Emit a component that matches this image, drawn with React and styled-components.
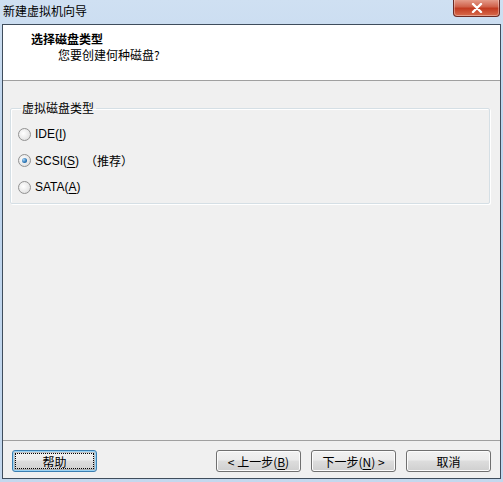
import React from "react";
import styled, { createGlobalStyle } from "styled-components";

const GlobalStyle = createGlobalStyle`
  html, body {
    margin: 0;
    padding: 0;
  }
  body {
    font-family: "Liberation Sans", "Noto Sans CJK SC", sans-serif;
    font-size: 12px;
    color: #000;
  }
`;

const options = [
  { id: "ide", label: "IDE", key: "I", note: "" },
  { id: "scsi", label: "SCSI", key: "S", note: "（推荐）", checked: true },
  { id: "sata", label: "SATA", key: "A", note: "" },
];

const App = () => {
  return (
    <>
      <GlobalStyle />
      <Frame>
        <TitleBar>
          <Title>新建虚拟机向导</Title>
          <CloseButton>
            <svg width="14" height="10" viewBox="0 0 14 10">
              <path d="M3 1 L11 9 M11 1 L3 9" stroke="#fff" strokeWidth="2.4" strokeLinecap="round" />
            </svg>
          </CloseButton>
        </TitleBar>

        <Client>
          <Header>
            <HeaderTitle>选择磁盘类型</HeaderTitle>
            <HeaderSub>您要创建何种磁盘?</HeaderSub>
          </Header>

          <Body>
            <GroupBox>
              <Legend>虚拟磁盘类型</Legend>
              {options.map((o) => (
                <RadioRow key={o.id}>
                  <Radio $checked={o.checked} />
                  <RadioLabel>
                    {o.label}(<u>{o.key}</u>)
                  </RadioLabel>
                  {o.note && <Note>{o.note}</Note>}
                </RadioRow>
              ))}
            </GroupBox>
          </Body>

          <Footer>
            <Button $focused>帮助</Button>
            <Spacer />
            <Button>&lt; 上一步(<u>B</u>)</Button>
            <Button>下一步(<u>N</u>) &gt;</Button>
            <Button>取消</Button>
          </Footer>
        </Client>
      </Frame>
    </>
  );
};

export default App;

const Frame = styled.div`
  width: 503px;
  height: 482px;
  box-sizing: border-box;
  display: flex;
  flex-direction: column;
  padding: 0 2px 3px 2px;
  background: linear-gradient(180deg, #cfe0f2 0%, #bcd3ec 30%, #c4d8ee 100%);
`;

const TitleBar = styled.div`
  height: 24px;
  display: flex;
  align-items: flex-start;
  justify-content: space-between;
`;

const Title = styled.div`
  padding: 4px 0 0 1px;
  font-family: "Noto Sans CJK SC", sans-serif;
  font-size: 12px;
  line-height: 14px;
  color: #000;
`;

const CloseButton = styled.div`
  width: 45px;
  height: 17px;
  margin-top: -1px;
  margin-right: 1px;
  display: flex;
  align-items: center;
  justify-content: center;
  border: 1px solid #6b2a24;
  border-top: none;
  border-radius: 0 0 4px 4px;
  background: linear-gradient(180deg, #e8a493 0%, #d0624b 45%, #c23b21 55%, #d86b4c 100%);
  box-shadow: inset 0 0 0 1px rgba(255, 255, 255, 0.35);
`;

const Client = styled.div`
  flex: 1;
  display: flex;
  flex-direction: column;
  border: 1px solid #3f4d5c;
  background: #f0f0f0;
`;

const Header = styled.div`
  height: 56px;
  box-sizing: border-box;
  background: #fff;
  border-bottom: 1px solid #a0a0a0;
  padding: 6px 0 0 28px;
  font-family: "Noto Sans CJK SC", sans-serif;
`;

const HeaderTitle = styled.div`
  font-weight: bold;
  font-size: 12px;
  line-height: 16px;
`;

const HeaderSub = styled.div`
  padding-left: 27px;
  font-size: 12px;
  line-height: 16px;
`;

const Body = styled.div`
  flex: 1;
  padding: 20px 10px 0 7px;
`;

const GroupBox = styled.fieldset`
  margin: 0;
  height: 103px;
  box-sizing: border-box;
  padding: 6px 0 0 7px;
  border: 1px solid #d5dfe5;
  border-radius: 2px;
  box-shadow: inset 1px 1px 0 #fff, 1px 1px 0 #fff;
`;

const Legend = styled.legend`
  padding: 0 2px 0 1px;
  margin-left: 3px;
  font-family: "Noto Sans CJK SC", sans-serif;
  font-size: 12px;
  line-height: 14px;
`;

const RadioRow = styled.div`
  height: 26.5px;
  display: flex;
  align-items: center;
`;

const Radio = styled.span`
  width: 13px;
  height: 13px;
  box-sizing: border-box;
  border-radius: 50%;
  border: 1px solid #929292;
  background: radial-gradient(circle at 40% 40%, #ffffff 0%, #e6e6e6 65%, #cdcdcd 100%);
  position: relative;
  margin-right: 4px;

  &::after {
    content: "";
    display: ${(p) => (p.$checked ? "block" : "none")};
    position: absolute;
    left: 3px;
    top: 3px;
    width: 5px;
    height: 5px;
    border-radius: 50%;
    background: radial-gradient(circle at 35% 35%, #a6d4f5 0%, #2a74b4 60%, #1b4f84 100%);
  }
`;

const RadioLabel = styled.span`
  font-family: "Liberation Sans", "Noto Sans CJK SC", sans-serif;
  font-size: 12px;
  line-height: 14px;

  u {
    text-underline-offset: 2px;
  }
`;

const Note = styled.span`
  margin-left: 6px;
  font-family: "Noto Sans CJK SC", sans-serif;
  font-size: 12px;
`;

const Footer = styled.div`
  height: 38px;
  box-sizing: border-box;
  border-top: 1px solid #a0a0a0;
  display: flex;
  align-items: flex-start;
  padding: 9px 9px 0 9px;
  gap: 10px;
`;

const Spacer = styled.div`
  flex: 1;
`;

const Button = styled.button`
  width: 85px;
  height: 22px;
  box-sizing: border-box;
  padding: 0;
  font-family: "Noto Sans CJK SC", sans-serif;
  font-size: 12px;
  color: #000;
  border: 1px solid ${(p) => (p.$focused ? "#3c7fb1" : "#707070")};
  border-radius: 3px;
  background: linear-gradient(180deg, #f2f2f2 0%, #ebebeb 45%, #dddddd 50%, #cfcfcf 100%);
  box-shadow: ${(p) =>
    p.$focused
      ? "inset 0 0 0 1px #9cd5f6, inset 0 0 0 2px #1a1a1a33"
      : "inset 0 0 0 1px #fcfcfc"};
  outline: ${(p) => (p.$focused ? "1px dotted #000" : "none")};
  outline-offset: -4px;

  u {
    text-underline-offset: 2px;
  }
`;
